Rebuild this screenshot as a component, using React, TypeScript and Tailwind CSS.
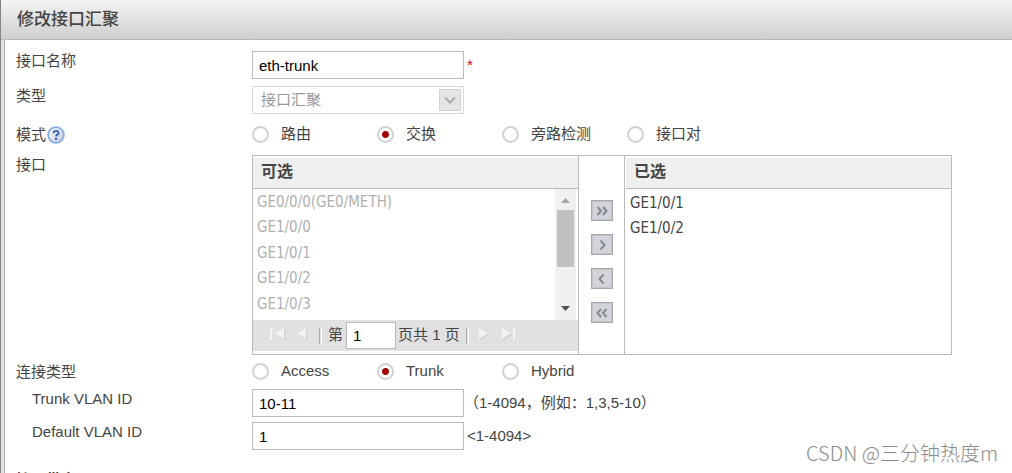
import React, { useState } from "react";

const LATIN_CJK = "font-['Liberation_Sans','Noto_Sans_CJK_SC',sans-serif]";
const LIST_FONT = "font-['DejaVu_Sans_Condensed','Noto_Sans','Noto_Sans_CJK_SC',sans-serif]";

const available = ["GE0/0/0(GE0/METH)", "GE1/0/0", "GE1/0/1", "GE1/0/2", "GE1/0/3"];
const selected = ["GE1/0/1", "GE1/0/2"];

function Row({
  label,
  htmlFor,
  indent = false,
  children,
}: {
  label: React.ReactNode;
  htmlFor?: string;
  indent?: boolean;
  children: React.ReactNode;
}) {
  const Tag = htmlFor ? "label" : "div";
  return (
    <div className="flex items-start">
      <Tag htmlFor={htmlFor} className={`w-[236px] shrink-0 leading-5 ${indent ? "pl-4" : ""}`}>
        {label}
      </Tag>
      <div className="flex min-w-0 grow items-center">{children}</div>
    </div>
  );
}

function TextField({ id, initial }: { id: string; initial: string }) {
  return (
    <input
      id={id}
      type="text"
      defaultValue={initial}
      className="h-7 w-[212px] border border-[#b9b9c0] bg-white px-[6px] text-black outline-none"
    />
  );
}

function RadioGroup({ name, label, options, initial }: { name: string; label: string; options: string[]; initial: string }) {
  const [value, setValue] = useState(initial);
  return (
    <div role="radiogroup" aria-label={label} className="flex h-[26px] items-center">
      {options.map((o) => (
        <label key={o} className="flex w-[125px] items-center gap-3">
          <input
            type="radio"
            name={name}
            checked={value === o}
            onChange={() => setValue(o)}
            className="size-[17px] shrink-0 appearance-none rounded-full border-2 border-[#d2d2d2] bg-white bg-clip-padding checked:bg-[radial-gradient(circle,#a00000_3px,#fff_4px)]"
          />
          {o}
        </label>
      ))}
    </div>
  );
}

function HelpIcon() {
  return (
    <svg width="18" height="18" viewBox="0 0 18 18" aria-hidden="true">
      <defs>
        <linearGradient id="help" x1="0" y1="0" x2="1" y2="1">
          <stop offset="0" stopColor="#ffffff" />
          <stop offset="1" stopColor="#c3c6d6" />
        </linearGradient>
      </defs>
      <circle cx="9" cy="9" r="7.8" fill="url(#help)" stroke="#86abe6" strokeWidth="1.8" />
      <path d="M6.6 7.2C6.6 5.6 7.6 4.9 9 4.9s2.5.8 2.5 2.1c0 1.6-2.4 1.7-2.4 3.6" fill="none" stroke="#3465b5" strokeWidth="1.9" />
      <rect x="8" y="11.8" width="2.2" height="2.1" fill="#3465b5" />
    </svg>
  );
}

function MoveButton({ label, path }: { label: string; path: string }) {
  return (
    <button
      type="button"
      aria-label={label}
      className="flex h-[21px] w-[22px] items-center justify-center border border-[#a5a7b0] bg-[#d3d4d7] shadow-[inset_0_0_0_1px_#c3c5ca]"
    >
      <svg width="14" height="14" viewBox="0 0 14 14" fill="none" stroke="#868a94" strokeWidth="2.1" aria-hidden="true">
        <path d={path} />
      </svg>
    </button>
  );
}

function PageButton({ label, path, bar }: { label: string; path: string; bar?: number }) {
  return (
    <button type="button" aria-label={label} className="block h-[18px] w-[18px]">
      <svg width="18" height="18" viewBox="0 0 18 18" aria-hidden="true">
        <g fill="#cdcdcd" transform="translate(1 1)">
          <path d={path} />
          {bar !== undefined && <rect x={bar} y="3" width="2" height="12" />}
        </g>
        <g fill="#f3f3f3">
          <path d={path} />
          {bar !== undefined && <rect x={bar} y="3" width="2.5" height="12" />}
        </g>
      </svg>
    </button>
  );
}

function Separator() {
  return <span className="h-4 w-[3px] border-l border-r border-l-[#aaaaaa] border-r-white" />;
}

function PanelTitle({ children }: { children: React.ReactNode }) {
  return (
    <h2 className="h-[33px] border-b border-[#b9b9c0] bg-[#efefef] pl-2 text-base font-bold leading-8 text-[#444] shadow-[inset_0_2px_0_#fff]">
      {children}
    </h2>
  );
}

function AvailablePanel() {
  return (
    <section className="w-[326px] shrink-0 border-r border-[#b9b9c0]">
      <PanelTitle>可选</PanelTitle>
      <div className="flex h-[131px]">
        <ul className={`flex h-32 grow flex-col pl-1 text-[#b0b0b0] ${LIST_FONT}`}>
          {available.map((n) => (
            <li key={n} className="flex flex-1 items-center">
              {n}
            </li>
          ))}
        </ul>
        <div className="mr-[2px] flex w-[21px] flex-col items-center bg-[#f0f0f0]" aria-hidden="true">
          <svg width="21" height="21" viewBox="0 0 21 21">
            <path d="M6 14 10.5 9 15 14Z" fill="#a3a3a3" />
          </svg>
          <div className="h-[57px] w-[17px] bg-[#c1c1c1]" />
          <svg className="mt-auto" width="21" height="21" viewBox="0 0 21 21">
            <path d="M6 7 10.5 12 15 7Z" fill="#505050" />
          </svg>
        </div>
      </div>
      <div className="flex h-[31px] items-center bg-[#e1e1e1] pl-4">
        <div className="flex items-center gap-[7px] pb-1">
          <PageButton label="首页" path="M15 3V14L6 8.5Z" bar={1} />
          <PageButton label="上一页" path="M12 3V14L3 8.5Z" />
        </div>
        <div className="flex items-center pl-[7px]">
          <Separator />
          <label htmlFor="page" className="pl-[6px] pr-[3px]">
            第
          </label>
          <input
            id="page"
            type="text"
            defaultValue="1"
            className="h-[27px] w-[50px] border border-[#b9b9c0] bg-white px-[6px] text-black outline-none"
          />
          <span className="pl-[2px] pr-[6px]">页共 1 页</span>
          <Separator />
        </div>
        <div className="flex items-center gap-[5px] pb-1 pl-[7px]">
          <PageButton label="下一页" path="M3 3V14L12 8.5Z" />
          <PageButton label="末页" path="M3 3V14L12 8.5Z" bar={14} />
        </div>
      </div>
    </section>
  );
}

function SelectedPanel() {
  return (
    <section className="min-w-0 grow border-l border-[#b9b9c0] pl-px">
      <PanelTitle>已选</PanelTitle>
      <ul className={`pl-1 pt-[2px] leading-[25px] text-[#444] ${LIST_FONT}`}>
        {selected.map((n) => (
          <li key={n}>{n}</li>
        ))}
      </ul>
    </section>
  );
}

export default function App() {
  return (
    <main className={`relative h-screen overflow-hidden bg-white text-[15px] text-[#444] ${LATIN_CJK}`}>
      <div className="flex min-h-full flex-col border-l border-[#858585] bg-[#e3e3e6]">
        <header className="flex h-10 items-center border-b border-[#b9b9b9] bg-linear-to-b from-[#f4f4f4] to-[#cfcfcf] pl-4">
          <h1 className="text-[17px] font-medium text-[#444]">修改接口汇聚</h1>
        </header>
        <form className="ml-[3px] grow border-l border-[#b5b5bb] bg-white pl-[11px] pt-[11px]">
          <div className="flex flex-col gap-[7px]">
            <Row label="接口名称" htmlFor="name">
              <TextField id="name" initial="eth-trunk" />
              <span className="pl-[3px] text-[15px] text-[#e00000]">*</span>
            </Row>
            <Row label="类型" htmlFor="type">
              <div className="relative w-[212px]">
                <select
                  id="type"
                  disabled
                  className="h-7 w-full appearance-none border border-[#d9d9dc] bg-white px-2 text-[#999] opacity-100"
                >
                  <option>接口汇聚</option>
                </select>
                <span className="pointer-events-none absolute right-[3px] top-[3px] flex size-[22px] items-center justify-center border border-[#cfd0d4] bg-[#e4e4e5]">
                  <svg width="12" height="12" viewBox="0 0 12 12" fill="none" stroke="#b0b1b4" strokeWidth="2.4" aria-hidden="true">
                    <path d="M1 3.5 6 8.5 11 3.5" />
                  </svg>
                </span>
              </div>
            </Row>
            <Row
              label={
                <span className="flex items-center gap-px pt-1">
                  模式
                  <HelpIcon />
                </span>
              }
            >
              <RadioGroup name="mode" label="模式" options={["路由", "交换", "旁路检测", "接口对"]} initial="交换" />
            </Row>
          </div>
          <div className="pt-2">
            <Row label="接口">
              <div className="flex h-[200px] w-[700px] border border-[#b9b9c0]">
                <AvailablePanel />
                <div className="flex w-[45px] shrink-0 flex-col items-center gap-[13px] pt-11">
                  <MoveButton label="全部添加" path="M2.5 3 6 7 2.5 11M8 3 11.5 7 8 11" />
                  <MoveButton label="添加" path="M5.5 2.5 9.5 7 5.5 11.5" />
                  <MoveButton label="移除" path="M8.5 2.5 4.5 7 8.5 11.5" />
                  <MoveButton label="全部移除" path="M6 3 2.5 7 6 11M11.5 3 8 7 11.5 11" />
                </div>
                <SelectedPanel />
              </div>
            </Row>
          </div>
          <div className="flex flex-col gap-[5px] pt-[3px]">
            <Row label={<span className="block pt-1">连接类型</span>}>
              <RadioGroup name="link" label="连接类型" options={["Access", "Trunk", "Hybrid"]} initial="Trunk" />
            </Row>
            <Row label="Trunk VLAN ID" htmlFor="trunk" indent>
              <TextField id="trunk" initial="10-11" />
              <span>（1-4094，例如：1,3,5-10）</span>
            </Row>
            <Row label="Default VLAN ID" htmlFor="default" indent>
              <TextField id="default" initial="1" />
              <span className="pl-[3px]">&lt;1-4094&gt;</span>
            </Row>
          </div>
          <h2 className="pt-5 font-bold leading-5">接口带宽</h2>
        </form>
      </div>
      <div className="absolute bottom-[6px] right-[14px] font-['Noto_Sans_CJK_SC',sans-serif] text-xl font-light text-[#8c8c8c]">
        CSDN @三分钟热度m
      </div>
    </main>
  );
}
